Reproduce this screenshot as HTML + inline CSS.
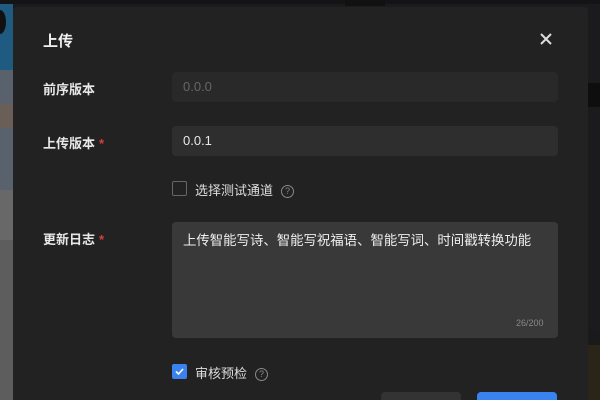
<!DOCTYPE html>
<html><head><meta charset="utf-8"><style>
*{margin:0;padding:0;box-sizing:border-box}
html,body{width:600px;height:400px;overflow:hidden}
body{position:relative;background:#1b1b1e;font-family:"Liberation Sans","Noto Sans CJK SC",sans-serif;}
.abs{position:absolute}
.lbl{position:absolute;left:43px;font-size:13px;font-weight:bold;color:#e8e8e8}
.star{color:#d04040;margin-left:4px}
.inp{position:absolute;left:172px;width:386px;height:30px;border-radius:4px;font-size:13px;padding:8px 11px;line-height:14px}
.q{display:inline-block;width:13px;height:13px;border:1px solid #888;border-radius:50%;font-size:9px;line-height:11px;text-align:center;color:#888;vertical-align:middle;margin-left:8px}
</style></head><body>
<div class="abs" style="left:0;top:0;width:600px;height:4px;background:#141416"></div>
<div class="abs" style="left:345px;top:0;width:40px;height:6px;background:#111;"></div>
<div class="abs" style="left:0;top:4px;width:13px;height:66px;background:#1f5a80"></div>
<div class="abs" style="left:-6px;top:10px;width:12px;height:24px;border-radius:50%;background:#111"></div>
<div class="abs" style="left:0;top:70px;width:13px;height:120px;background:#58616c"></div>
<div class="abs" style="left:0;top:104px;width:13px;height:24px;background:#6a5f58"></div>
<div class="abs" style="left:0;top:190px;width:13px;height:50px;background:#686868"></div>
<div class="abs" style="left:0;top:240px;width:13px;height:160px;background:#5d5d5d"></div>
<div class="abs" style="left:588px;top:83px;width:12px;height:24px;background:#0e0e0e"></div>
<div class="abs" style="left:588px;top:330px;width:12px;height:15px;background:#1a1a1c"></div>
<div class="abs" style="left:588px;top:345px;width:12px;height:55px;background:#2a2518"></div>

<div class="abs" style="left:13px;top:7px;width:575px;height:393px;background:#222;border-radius:4px 4px 0 0"></div>
<div class="abs" style="left:43px;top:30px;font-size:15px;font-weight:bold;color:#f0f0f0">上传</div>
<svg class="abs" style="left:540px;top:33px" width="12" height="12" viewBox="0 0 12 12"><path d="M1 1L11 11M11 1L1 11" stroke="#ddd" stroke-width="2"/></svg>

<div class="lbl" style="top:79px">前序版本</div>
<div class="inp" style="top:72px;background:#292929;color:#666">0.0.0</div>
<div class="lbl" style="top:133px">上传版本<span class="star">*</span></div>
<div class="inp" style="top:126px;background:#2e2e2e;color:#e8e8e8">0.0.1</div>

<div class="abs" style="left:172px;top:181px;width:15px;height:15px;border:1px solid #666;border-radius:2px"></div>
<div class="abs" style="left:195px;top:180px;font-size:13px;color:#ddd">选择测试通道<span class="q">?</span></div>

<div class="lbl" style="top:229px">更新日志<span class="star">*</span></div>
<div class="abs" style="left:172px;top:222px;width:386px;height:116px;background:#393939;border-radius:4px;font-size:13.4px;color:#eee;padding:7px 11px">上传智能写诗、智能写祝福语、智能写词、时间戳转换功能</div>
<div class="abs" style="left:516px;top:318px;font-size:9px;color:#888">26/200</div>

<div class="abs" style="left:172px;top:364px;width:15px;height:15px;background:#3a82f0;border-radius:2px"><svg width="15" height="15" viewBox="0 0 15 15"><path d="M4 7.5L6.5 10L11 5" stroke="#fff" stroke-width="1.6" fill="none"/></svg></div>
<div class="abs" style="left:195px;top:363px;font-size:13px;color:#ddd">审核预检<span class="q">?</span></div>

<div class="abs" style="left:381px;top:392px;width:80px;height:8px;background:#333;border-radius:4px 4px 0 0"></div>
<div class="abs" style="left:477px;top:392px;width:80px;height:8px;background:#3a82f0;border-radius:4px 4px 0 0"></div>
</body></html>
